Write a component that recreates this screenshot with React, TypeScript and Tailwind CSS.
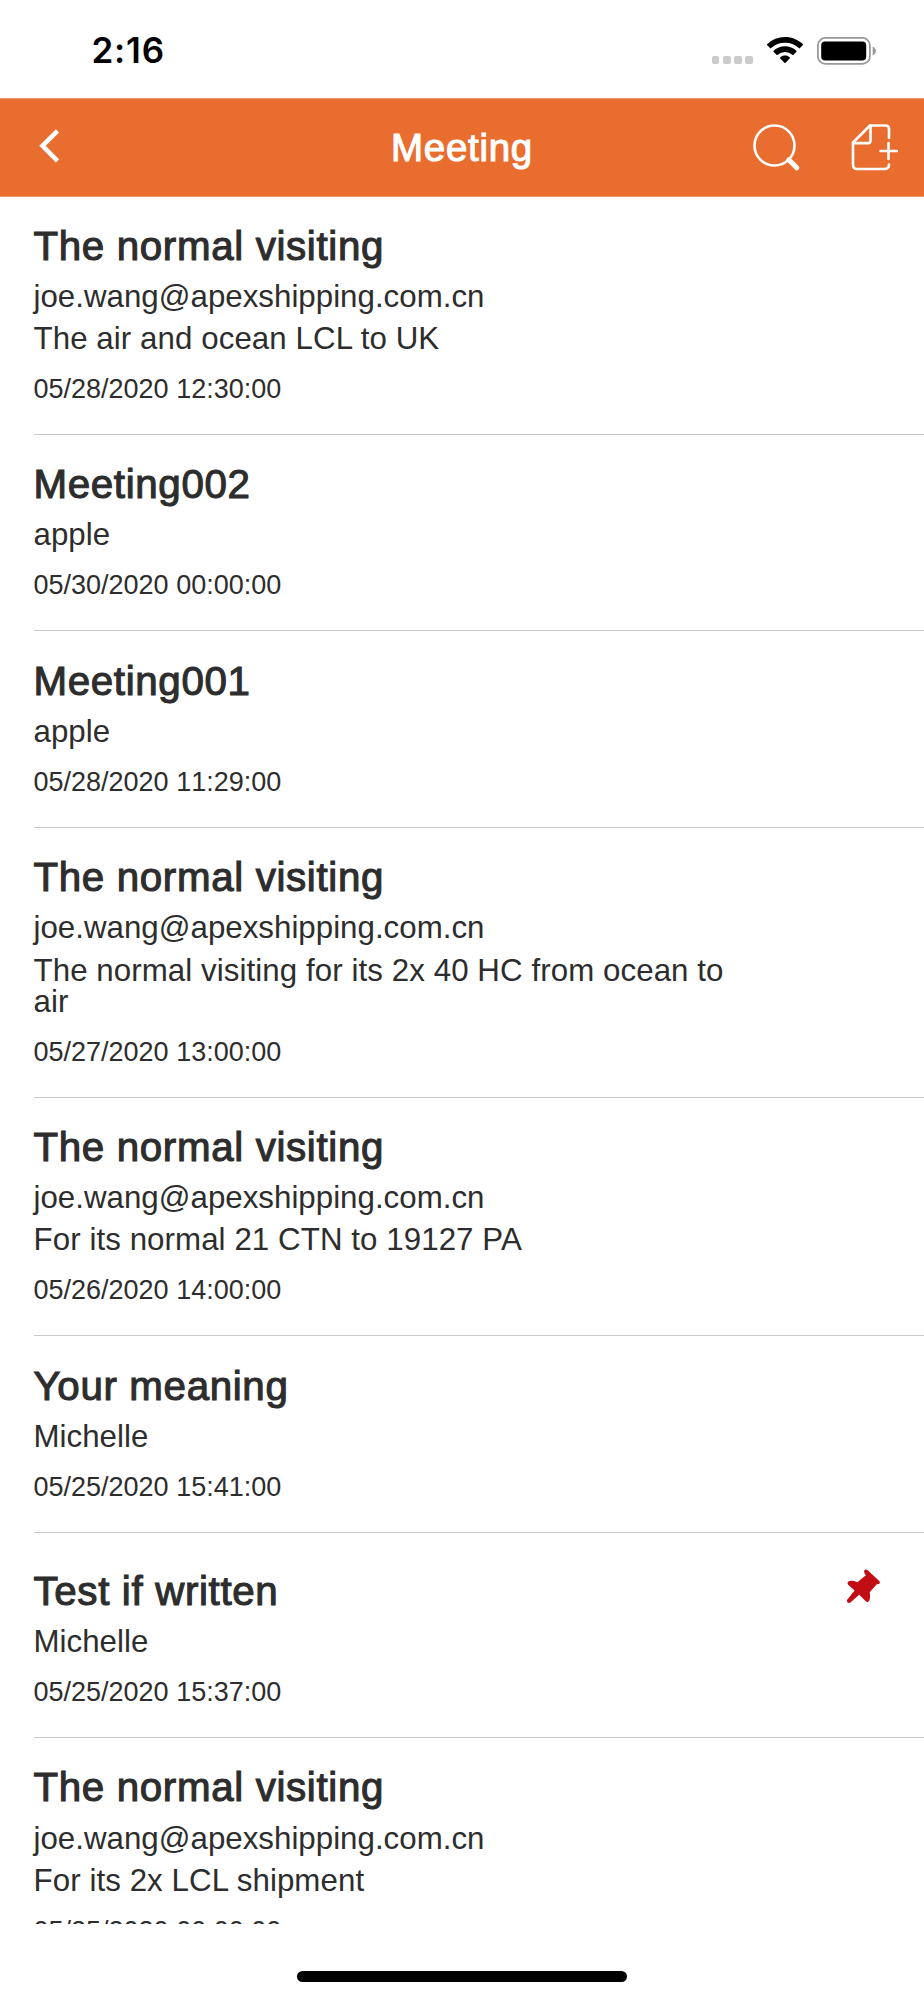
interface Meeting {
    title: string
    person: string
    note?: string
    date: string
    pinned?: boolean
}

const meetings: Meeting[] = [
    { title: "The normal visiting", person: "joe.wang@apexshipping.com.cn", note: "The air and ocean LCL to UK", date: "05/28/2020 12:30:00" },
    { title: "Meeting002", person: "apple", date: "05/30/2020 00:00:00" },
    { title: "Meeting001", person: "apple", date: "05/28/2020 11:29:00" },
    { title: "The normal visiting", person: "joe.wang@apexshipping.com.cn", note: "The normal visiting for its 2x 40 HC from ocean to air", date: "05/27/2020 13:00:00" },
    { title: "The normal visiting", person: "joe.wang@apexshipping.com.cn", note: "For its normal 21 CTN to 19127 PA", date: "05/26/2020 14:00:00" },
    { title: "Your meaning", person: "Michelle", date: "05/25/2020 15:41:00" },
    { title: "Test if written", person: "Michelle", date: "05/25/2020 15:37:00", pinned: true },
    { title: "The normal visiting", person: "joe.wang@apexshipping.com.cn", note: "For its 2x LCL shipment", date: "05/25/2020 00:00:00" },
]

function StatusBar() {
    return (
        <div className="flex h-[98px] shrink-0 items-start justify-between pl-[91.500px] pr-[48px] pt-[36px]">
            <span className="mt-[-4px] font-['Inter',sans-serif] text-[35px] font-semibold leading-[37px] tracking-[0.8px] text-black">2:16</span>
            <div className="flex items-start">
                <div className="mr-[14px] mt-[20px] flex gap-[3.6px]">
                    {[0, 1, 2, 3].map((i) => (
                        <span key={i} className="h-[7.6px] w-[7.6px] rounded-[2px] bg-[#cbcbcb]" />
                    ))}
                </div>
                <svg className="mr-[14px] mt-[1px] h-[27px] w-[36px]" viewBox="0 0 36 27" fill="#000">
                    <path d="M18 0c6.900 0 13.200 2.700 17.700 7.100.4.400.4.900 0 1.200l-2.700 2.800c-.4.400-.9.400-1.200 0A20 20 0 0 0 18 5.700 20 20 0 0 0 4.200 11.100c-.3.400-.8.400-1.200 0L.3 8.300c-.4-.3-.4-.8 0-1.200A25.400 25.400 0 0 1 18 0Z" />
                    <path d="M18 9.300c4.400 0 8.300 1.700 11.300 4.400.4.400.4.900 0 1.300l-2.800 2.700c-.3.400-.8.400-1.200 0a11 11 0 0 0-14.600 0c-.4.400-.9.400-1.200 0L6.700 15c-.4-.4-.4-.9 0-1.300 3-2.700 6.900-4.400 11.300-4.400Z" />
                    <path d="M18 18.500c1.800 0 3.500.7 4.700 1.700.4.400.4.900 0 1.300l-4.100 4.200c-.4.400-.8.400-1.200 0l-4.100-4.200c-.4-.4-.4-.9 0-1.300 1.200-1 2.900-1.700 4.700-1.700Z" />
                </svg>
                <svg className="mt-[0.500px] h-[28px] w-[59px]" viewBox="0 0 59 28">
                    <rect x="0.900" y="0.900" width="52" height="26" rx="7.500" fill="none" stroke="#999" strokeWidth="1.800" />
                    <rect x="4.200" y="4.400" width="45" height="19" rx="4" fill="#000" />
                    <path d="M55.700 9.500c2 .9 3.100 2.500 3.100 4.400s-1.100 3.600-3.100 4.500Z" fill="#999" />
                </svg>
            </div>
        </div>
    )
}

function Header() {
    return (
        <header className="grid h-[99px] shrink-0 grid-cols-[1fr_auto_1fr] items-start border-t border-b border-[#f0986d] bg-[#e96d2f] px-[26px] text-white">
            <svg className="ml-[13px] mt-[30px] h-[34px] w-[21px]" viewBox="0 0 21 34" fill="none" stroke="currentColor" strokeWidth="4.600">
                <path d="M18.500 1.800 3.500 16.800 18.500 31.800" />
            </svg>
            <h1 className="mt-[27px] text-[38.500px] leading-[44px] tracking-[0.7px] [-webkit-text-stroke:1.100px_currentColor]">Meeting</h1>
            <div className="flex justify-end gap-[50px] pt-[25px]">
                <svg className="h-[48px] w-[48px]" viewBox="0 0 48 48" fill="none" stroke="currentColor">
                    <circle cx="21.500" cy="21.500" r="20" strokeWidth="2.600" />
                    <path d="M34.500 36.500 37 34" strokeWidth="2" />
                    <path d="M35.800 35.800 43.800 43.800" strokeWidth="5" strokeLinecap="round" />
                </svg>
                <svg className="h-[48px] w-[47px]" viewBox="0 0 47 48" fill="none" stroke="currentColor" strokeWidth="2.600" strokeLinecap="round" strokeLinejoin="round">
                    <path d="M38 14V5Q38 1.500 34.500 1.500H19L2 18.500V40.500Q2 45 6 45H33Q38 45 38 40.500" />
                    <path d="M19.500 1.500V16.500Q19.500 19.100 17 19.100H2" />
                    <path d="M37.500 19V35M29.500 27H46" />
                </svg>
            </div>
        </header>
    )
}

function PinIcon() {
    return (
        <svg className="mr-[43px] mt-[-3.500px] h-[36px] w-[36px] shrink-0" viewBox="0 0 36 36" fill="#c20d15">
            <path d="M19.300 4.500C18.200 2.500 20.800.4 22.700 2.200L34 12.800C36 14.800 34.100 17 32 16L24.700 24.300C25.300 27.300 25.200 30 24.400 32.300 23.700 34.300 22 34.600 20.800 33.300L14.200 26.800 5.400 34.600C3.500 36 1.100 34.200 2.200 31.800L9.600 22.500 3.200 16.700C1.900 15.300 2.600 13.400 4.600 12.900 7 12.500 9.700 13 12.300 14.200L20.900 7.300C20.200 6.500 19.600 5.500 19.300 4.500Z" />
        </svg>
    )
}

function MeetingRow({ title, person, note, date, pinned }: Meeting) {
    return (
        <li className={`flex items-start justify-between border-b border-[#cacaca] pb-[31.100px] ${pinned ? "pt-[38.200px]" : "pt-[29.200px]"}`}>
            <div className="w-[730px]">
                <h2 className="text-[40.300px] leading-[42px] tracking-[0.65px] [-webkit-text-stroke:1.100px_currentColor]">{title}</h2>
                <p className="mt-[13.200px] text-[31.250px] leading-[31.250px] tracking-[0.02px]">{person}</p>
                {note && <p className="mt-[11px] text-[31.250px] leading-[31.250px] tracking-[0.08px]">{note}</p>}
                <p className="mt-[21.700px] text-[27px] leading-[27px] [font-kerning:none]">{date}</p>
            </div>
            {pinned && <PinIcon />}
        </li>
    )
}

export default function App() {
    return (
        <div className="flex h-[2000px] w-[924px] flex-col overflow-hidden bg-white font-['Liberation_Sans',Arial,sans-serif] text-[#2d2d2d]">
            <StatusBar />
            <Header />
            <ul className="-mt-[0.600px] min-h-0 flex-1 overflow-hidden pl-[33.500px]">
                {meetings.map((meeting, i) => (
                    <MeetingRow key={i} {...meeting} />
                ))}
            </ul>
            <div className="flex h-[76px] shrink-0 justify-center pt-[47px]">
                <div className="h-[11px] w-[330px] rounded-full bg-black" />
            </div>
        </div>
    )
}
